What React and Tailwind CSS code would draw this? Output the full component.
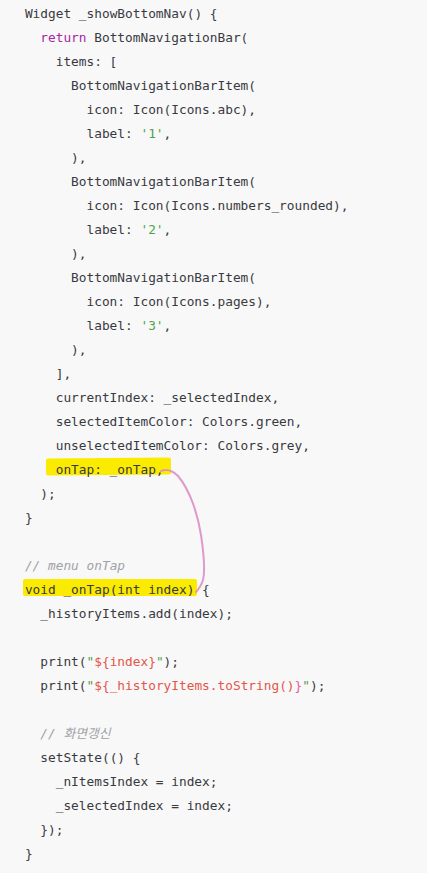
import React from "react";

const D = "text-[#383a42]";
const P = "text-[#a626a4]";
const G = "text-[#50a14f]";
const R = "text-[#e45649]";
const C = "text-[#a0a1a7] italic";

const lines = [
  [1, [["Widget _showBottomNav() {", D]]],
  [2, [["return", P], [" BottomNavigationBar(", D]]],
  [3, [["items: [", D]]],
  [4, [["BottomNavigationBarItem(", D]]],
  [5, [["icon: Icon(Icons.abc),", D]]],
  [5, [["label: ", D], ["'1'", G], [",", D]]],
  [4, [["),", D]]],
  [4, [["BottomNavigationBarItem(", D]]],
  [5, [["icon: Icon(Icons.numbers_rounded),", D]]],
  [5, [["label: ", D], ["'2'", G], [",", D]]],
  [4, [["),", D]]],
  [4, [["BottomNavigationBarItem(", D]]],
  [5, [["icon: Icon(Icons.pages),", D]]],
  [5, [["label: ", D], ["'3'", G], [",", D]]],
  [4, [["),", D]]],
  [3, [["],", D]]],
  [3, [["currentIndex: _selectedIndex,", D]]],
  [3, [["selectedItemColor: Colors.green,", D]]],
  [3, [["unselectedItemColor: Colors.grey,", D]]],
  [3, [["onTap: _onTap,", D]], "tap"],
  [2, [[");", D]]],
  [1, [["}", D]]],
  [0, []],
  [1, [["// menu onTap", C]]],
  [1, [["void _onTap(int index)", D]], "void", [[" {", D]]],
  [2, [["_historyItems.add(index);", D]]],
  [0, []],
  [2, [["print(", D], ['"', G], ["${index}", R], ['"', G], [");", D]]],
  [2, [["print(", D], ['"', G], ["${_historyItems.toString()", R], ["}", "text-[#e0609a]"], ['"', G], [");", D]]],
  [0, []],
  [2, [["// 화면갱신", C]]],
  [2, [["setState(() {", D]]],
  [3, [["_nItemsIndex = index;", D]]],
  [3, [["_selectedIndex = index;", D]]],
  [2, [["});", D]]],
  [1, [["}", D]]],
  [0, [["}", D]]],
];

const indentClass = [
  "pl-0",
  "pl-[15.4px]",
  "pl-[30.8px]",
  "pl-[46.2px]",
  "pl-[61.6px]",
  "pl-[77px]",
];

function Toks({ toks }) {
  return toks.map((t, i) => (
    <span key={i} className={t[1]}>
      {t[0]}
    </span>
  ));
}

export default function App() {
  return (
    <div className="relative w-[427px] h-[873px] overflow-hidden bg-[#f8f8f8]">
      <div
        className="pt-[2px] pl-[9.5px] text-[12.8px] leading-[24px] whitespace-pre"
        style={{ fontFamily: '"DejaVu Sans Mono", "Noto Sans CJK KR", monospace' }}
      >
        {lines.map(([ind, toks, hl, after], i) => (
          <div key={i} className={`h-[24px] ${indentClass[ind]}`}>
            {hl === "tap" ? (
              <span className="relative">
                <span className="absolute left-[-10px] right-[-7px] top-[-4px] bottom-[2px] bg-[#fbeb00] -rotate-[0.5deg] rounded-[2px]" />
                <span className="relative">
                  <Toks toks={toks} />
                </span>
              </span>
            ) : hl === "void" ? (
              <>
                <span className="relative">
                  <span className="absolute left-[-2px] right-[-3px] top-[-3px] bottom-[1px] bg-[#fbeb00] rounded-[2px]" />
                  <span className="relative">
                    <Toks toks={toks} />
                  </span>
                </span>
                <Toks toks={after} />
              </>
            ) : (
              <Toks toks={toks} />
            )}
          </div>
        ))}
      </div>
      <svg
        className="absolute left-0 top-0 pointer-events-none"
        width="427"
        height="873"
        viewBox="0 0 427 873"
      >
        <path
          d="M161 471 C 166 469, 172 470, 178 476 C 190 490, 198 515, 201 535 C 204 555, 205 572, 203 580 C 201 586, 199 589, 196 592"
          fill="none"
          stroke="#dc8fc4"
          strokeWidth="2"
          strokeLinecap="round"
          opacity="0.9"
        />
      </svg>
    </div>
  );
}
